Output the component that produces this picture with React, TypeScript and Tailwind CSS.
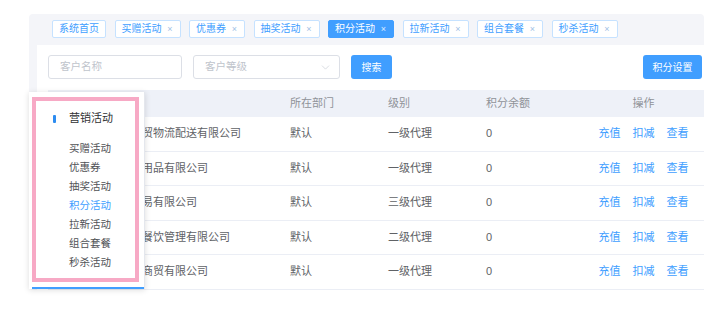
import { ChevronDown } from 'lucide-react';

// ─── Data ─────────────────────────────────────────────────────────────────────

const TAGS: { label: string; closable: boolean; active?: boolean }[] = [
  { label: '系统首页', closable: false },
  { label: '买赠活动', closable: true },
  { label: '优惠券', closable: true },
  { label: '抽奖活动', closable: true },
  { label: '积分活动', closable: true, active: true },
  { label: '拉新活动', closable: true },
  { label: '组合套餐', closable: true },
  { label: '秒杀活动', closable: true },
];

const ROWS = [
  { name: '广州市恒通达商贸物流配送有限公司', dept: '默认', level: '一级代理', points: '0' },
  { name: '深圳市佳美家日用品有限公司', dept: '默认', level: '一级代理', points: '0' },
  { name: '杭州华信国际贸易有限公司', dept: '默认', level: '三级代理', points: '0' },
  { name: '上海市鼎味之源餐饮管理有限公司', dept: '默认', level: '二级代理', points: '0' },
  { name: '北京市鑫源达盛商贸有限公司', dept: '默认', level: '一级代理', points: '0' },
];

const MENU = ['买赠活动', '优惠券', '抽奖活动', '积分活动', '拉新活动', '组合套餐', '秒杀活动'];

const FONT = "font-['Liberation_Sans','Noto_Sans_CJK_SC',sans-serif]";

// ─── Pieces ───────────────────────────────────────────────────────────────────

const Tag = ({ label, closable, active }: { label: string; closable: boolean; active?: boolean }) => (
  <div
    className={`h-[18px] flex items-center px-[6px] rounded-[2px] border text-[10px] leading-none ${
      active ? 'bg-[#409eff] border-[#409eff] text-white' : 'bg-white border-[#c6e2ff] text-[#409eff]'
    }`}
  >
    <span>{label}</span>
    {closable && (
      <span className={`ml-[5px] w-[7px] text-[9px] text-center ${active ? 'text-white/80' : 'text-[#9fbfe6]'}`}>
        ×
      </span>
    )}
  </div>
);

const PopupMenu = () => (
  <div className="absolute left-[29px] top-[92px] w-[116px] h-[197px] bg-white shadow-[0_1px_6px_rgba(0,0,0,0.14)] border-r border-[#e4e7ed]">
    <div className="ml-[3px] mt-[5px] w-[107px] h-[185px] border-[4px] border-[#f7a9c5]">
      <div className="pt-[8px] h-[27px] flex items-center">
        <span className="ml-[17px] w-[3px] h-[8px] bg-[#2d8cf0] rounded-[1px]" />
        <span className="ml-[13px] text-[11px] text-[#303133] leading-none">营销活动</span>
      </div>
      <div className="mt-[10.5px] flex flex-col">
        {MENU.map((m) => (
          <div
            key={m}
            className={`h-[19px] flex items-center pl-[33px] text-[10.5px] leading-none ${
              m === '积分活动' ? 'text-[#409eff]' : 'text-[#505256]'
            }`}
          >
            {m}
          </div>
        ))}
      </div>
    </div>
    <div className="absolute left-[3px] right-0 bottom-0 h-[2px] bg-[#409eff]" />
  </div>
);

// ─── Page ─────────────────────────────────────────────────────────────────────

export default function App() {
  return (
    <div className={`relative w-[726px] h-[310px] bg-white overflow-hidden ${FONT}`}>
      <div className="ml-[29px] mt-[14px] w-[675px] h-[276px] bg-[#f4f5f9] rounded-[4px] flex flex-col">
        {/* Tags */}
        <div className="h-[31px] flex items-start gap-[8.5px] pl-[23px] pt-[6px]">
          {TAGS.map((t) => (
            <Tag key={t.label} {...t} />
          ))}
        </div>

        {/* Content */}
        <div className="flex-1 ml-[8px] bg-white pl-[11px] pt-[10px]">
          {/* Filters */}
          <div className="flex items-center h-[24px] pr-[2px]">
            <div className="w-[134px] h-[24px] border border-[#dcdfe6] rounded-[3px] flex items-center pl-[11px] text-[10.5px] text-[#c0c4cc]">
              客户名称
            </div>
            <div className="ml-[11px] w-[147px] h-[24px] border border-[#dcdfe6] rounded-[3px] flex items-center justify-between pl-[11px] pr-[7px] text-[10.5px] text-[#c0c4cc]">
              <span>客户等级</span>
              <ChevronDown size={13} strokeWidth={1.25} className="text-[#c8ccd4]" />
            </div>
            <button className="ml-[11px] w-[41px] h-[24px] bg-[#409eff] rounded-[3px] text-white text-[10px]">
              搜索
            </button>
            <div className="flex-1" />
            <button className="w-[59px] h-[24px] bg-[#409eff] rounded-[3px] text-white text-[10px]">
              积分设置
            </button>
          </div>

          {/* Table */}
          <div className="mt-[11px] text-[11px] leading-none">
            <div className="h-[27px] bg-[#eef1f8] flex items-center text-[#909399]">
              <div className="w-[230px] pl-[12px]">客户名称</div>
              <div className="w-[98px] pl-[12px]">所在部门</div>
              <div className="w-[98px] pl-[12px]">级别</div>
              <div className="w-[109px] pl-[12px]">积分余额</div>
              <div className="flex-1 text-center">操作</div>
            </div>
            {ROWS.map((r, i) => (
              <div key={i} className="h-[34.5px] border-b border-[#ebeef5] flex items-center text-[#606266]">
                <div className="w-[230px] pl-[17px] whitespace-nowrap">{r.name}</div>
                <div className="w-[98px] pl-[12px]">{r.dept}</div>
                <div className="w-[98px] pl-[12px]">{r.level}</div>
                <div className="w-[109px] pl-[12px]">{r.points}</div>
                <div className="flex-1 flex justify-center gap-[12px] text-[#409eff]">
                  <span>充值</span>
                  <span>扣减</span>
                  <span>查看</span>
                </div>
              </div>
            ))}
          </div>
        </div>
      </div>

      <PopupMenu />
    </div>
  );
}
